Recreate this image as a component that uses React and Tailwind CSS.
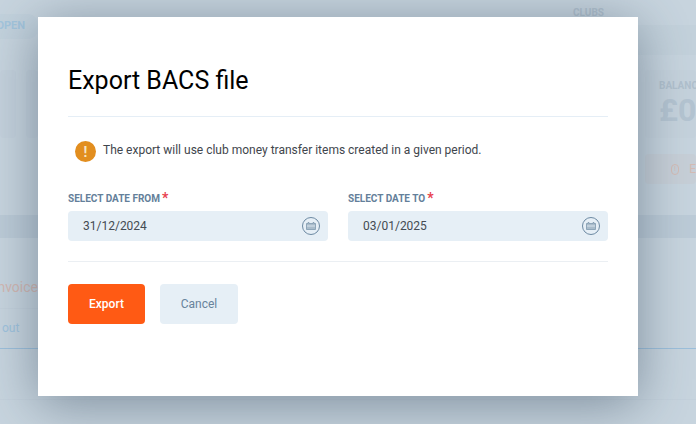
const font = { fontFamily: "Roboto, sans-serif" };

function CalIcon() {
  return (
    <span className="flex h-[18px] w-[18px] items-center justify-center rounded-full border border-[#6d8aa3]">
      <svg width="10" height="8" viewBox="0 0 10 8">
        <path d="M0.5 1.5H2V0.5H3V1.5H7V0.5H8V1.5H9.5V7.5H0.5Z" fill="#a9bccb" stroke="#7f99af" strokeWidth="0.8" />
        <path d="M1 4H9" stroke="#e6eff6" strokeWidth="0.8" />
      </svg>
    </span>
  );
}

function DateField({ label, value }) {
  return (
    <div className="flex-1">
      <div className="flex h-[18px] items-center text-[10px] font-bold text-[#64809a]">
        {label}
        <span className="ml-[2px] text-[14px] leading-none text-[#e8414f]">*</span>
      </div>
      <div className="mt-1 flex h-[30px] items-center justify-between rounded-[4px] bg-[#e6eff6] pl-[15px] pr-[8px] text-[12px] text-[#444b52]">
        <span>{value}</span>
        <CalIcon />
      </div>
    </div>
  );
}

export default function App() {
  return (
    <div style={font} className="relative h-[424px] w-[696px] overflow-hidden bg-[#c8d5df]">
      <div className="flex h-[38px] items-center justify-between">
        <div className="flex h-[25px] w-[38px] translate-y-[7px] items-center justify-end rounded-br-[10px] rounded-tr-[10px] bg-[#c3d2dd] pr-[13px] text-[11px] font-bold text-[#a3c5dd]">OPEN</div>
        <div className="mr-[92px] -translate-y-[7px] text-[10px] font-bold text-[#b1c1ce]">CLUBS</div>
      </div>
      <div className="absolute left-[638px] top-[25px] h-[30px] w-[58px] bg-[#c4d2dc]" />
      <div className="absolute left-[645px] top-[70px] h-[68px] w-[51px] rounded-[4px] bg-[#c6d3dd] pl-[14px] pt-[11px]">
        <div className="whitespace-nowrap text-[10px] font-bold leading-none text-[#b1c1ce]">BALANC</div>
        <div className="mt-[3px] whitespace-nowrap text-[32px] font-bold leading-none text-[#b5c5d2]">£0.</div>
      </div>
      <div className="absolute left-[645px] top-[154px] flex h-[30px] w-[51px] items-center rounded-[4px] bg-[#c8d0d8] text-[12px] text-[#d5bcb5]">
        <span className="ml-[26px] flex h-[11px] w-[11px] items-center justify-center rounded-full border border-[#d5bcb5] text-[8px] leading-none">!</span>
        <span className="ml-[10px]">E</span>
      </div>
      <div className="absolute left-0 top-[70px] h-[68px] w-[16px] rounded-[4px] bg-[#c5d2dd]" />
      <div className="absolute left-[26px] top-[70px] h-[68px] w-[12px] rounded-[4px] bg-[#c5d2dd]" />
      <div className="absolute left-0 top-[215px] h-[23px] w-[696px] bg-[#bdccd8]" />
      <div className="absolute left-0 top-[308px] h-px w-[38px] bg-[#c4d1dc]" />
      <div className="absolute right-[658px] top-[278px] whitespace-nowrap text-[14px] leading-[18px] text-[#d4b8b2]">nvoice</div>
      <div className="absolute left-[2px] top-[320px] text-[12px] leading-[16px] text-[#9fc3de]">out</div>
      <div className="absolute left-0 top-[348px] h-px w-[696px] bg-[#9dc0dc]" />
      <div className="absolute left-0 top-[399px] h-px w-[696px] bg-[#c4d1dc]" />

      <div className="absolute left-[38px] top-[17px] h-[379px] w-[600px] bg-white px-[30px] shadow-[0_8px_50px_rgba(50,70,90,0.5)]">
        <h1 className="pt-[48px] text-[25px] font-normal leading-[32px] text-black">Export BACS file</h1>
        <div className="mt-[19px] h-px bg-[#e5eef6]" />
        <div className="mt-[19px] flex items-start pl-[7px]">
          <span className="mt-[5px] flex h-[21px] w-[21px] items-center justify-center rounded-full bg-[#e28e1f] text-[14px] font-bold leading-none text-[#f6e6c8]">!</span>
          <p className="ml-[7px] pt-px text-[12px] leading-[26px] text-[#3f464d]">The export will use club money transfer items created in a given period.</p>
        </div>
        <div className="mt-[26px] flex gap-[20px]">
          <DateField label="SELECT DATE FROM" value="31/12/2024" />
          <DateField label="SELECT DATE TO" value="03/01/2025" />
        </div>
        <div className="mt-5 h-px bg-[#ebeff3]" />
        <div className="mt-[22px] flex gap-[15px]">
          <button className="h-[40px] w-[77px] rounded-[4px] bg-[#ff5a14] text-[12px] font-medium text-white">Export</button>
          <button className="h-[40px] w-[78px] rounded-[4px] bg-[#e6eff6] text-[12px] font-normal text-[#68839c]">Cancel</button>
        </div>
      </div>
    </div>
  );
}
